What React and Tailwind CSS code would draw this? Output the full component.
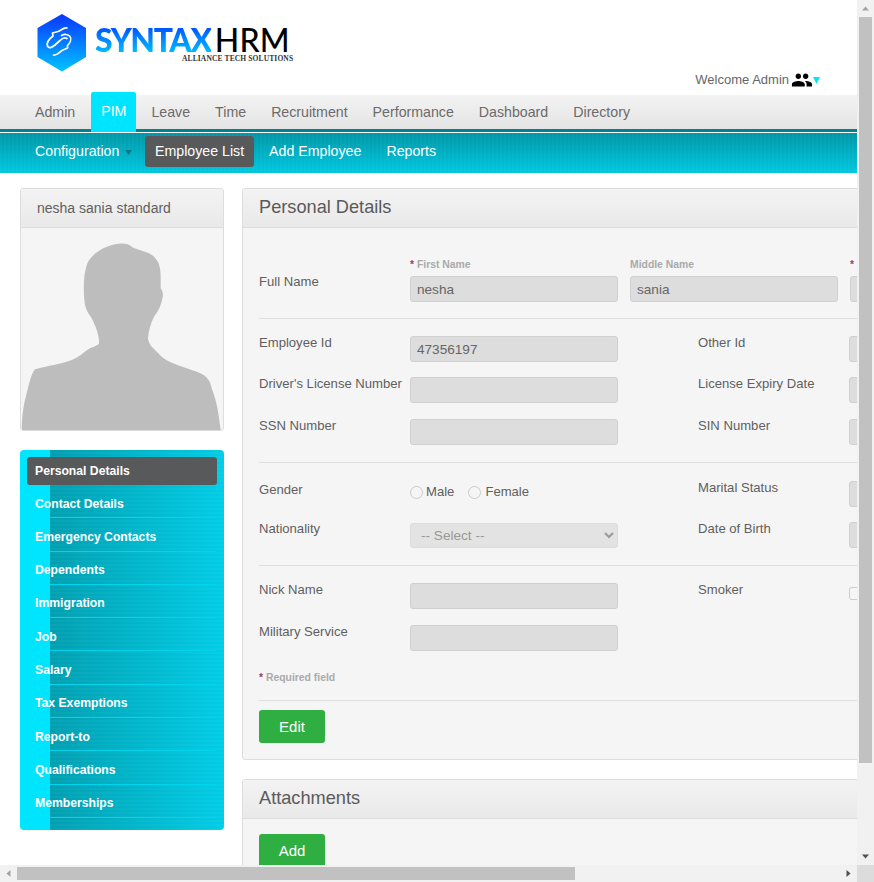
import React from 'react';
import { MdPeople } from 'react-icons/md';

const mainNav = ['Admin', 'PIM', 'Leave', 'Time', 'Recruitment', 'Performance', 'Dashboard', 'Directory'];

const sideNav = [
    'Contact Details',
    'Emergency Contacts',
    'Dependents',
    'Immigration',
    'Job',
    'Salary',
    'Tax Exemptions',
    'Report-to',
    'Qualifications',
    'Memberships',
];

const Logo = () => (
    <div className="flex items-start">
        <svg width="50" height="58" viewBox="0 0 50 58" className="shrink-0">
            <defs>
                <linearGradient id="hex" x1="0" y1="0" x2="0" y2="1">
                    <stop offset="0" stopColor="#0a35ff" />
                    <stop offset="1" stopColor="#00c4ff" />
                </linearGradient>
            </defs>
            <polygon points="25,0 49,14 49,43 25,57.5 0.5,43 0.5,14" fill="url(#hex)" />
            <path
                d="M30 14 C26 13.500 24 16.500 21 17.500 L15.500 19 L16 22 C12 25 9.500 29 10.500 32 C12 35 15 33.500 18 31 L23 26.500 C25 24.500 28 23 30 24.500 M24.500 21.500 C27 20 31 20 33 22.500 C35 25 33 29 30.500 31.500 L30.500 34 L25 36.500 C22 38.500 20 41.500 16.500 41"
                fill="none"
                stroke="#ffffff"
                strokeWidth="1.700"
                strokeLinecap="round"
                strokeLinejoin="round"
            />
        </svg>
        <div className="ml-[8px] mt-[10px] w-[200px]">
            <div className="flex items-baseline font-['Lato',sans-serif] text-[32px] leading-[32px]">
                <span className="bg-gradient-to-b from-[#1038ff] to-[#00c8ff] bg-clip-text font-black tracking-[-1.400px] text-transparent">SYNTAX</span>
                <span className="ml-[4px] font-medium tracking-[0.2px] text-black">HRM</span>
            </div>
            <div className="-mt-[1px] pl-[87px] font-['Liberation_Serif',serif] text-[7.500px] leading-[8px] font-bold tracking-[0.13px] whitespace-nowrap text-[#333333]">ALLIANCE TECH SOLUTIONS</div>
        </div>
    </div>
);

const Input = ({ value = '', className = '' }) => (
    <input
        readOnly
        value={value}
        className={`block h-[26px] rounded-[3px] border border-[#d0d0d0] bg-[#dddddd] px-[6px] text-[13.600px] text-[#666666] outline-none ${className}`}
    />
);

const NameField = ({ label, required, value }) => (
    <div className="mr-[12px] w-[208px] shrink-0">
        <div className="mb-[6px] h-[12px] pt-[1px] text-[10.400px] leading-[12px] font-bold text-[#aaaaaa]">
            {required && <span className="text-[#a04050]">* </span>}
            {label}
        </div>
        <Input value={value} className="w-[208px]" />
    </div>
);

const Row = ({ label, children, rightLabel, right, className = '', labelClass = 'pt-[1px]' }) => (
    <div className={`grid grid-cols-[151px_288px_151px_208px] ${className}`}>
        <div className={`h-[12px] leading-[12px] ${labelClass}`}>{label}</div>
        <div className="w-[208px]">{children}</div>
        {rightLabel && <div className="h-[12px] pt-[1px] leading-[12px]">{rightLabel}</div>}
        {right}
    </div>
);

const Divider = ({ className = '' }) => <div className={`h-px w-full bg-[#dedede] ${className}`} />;

const PanelHeader = ({ title }) => (
    <div className="flex h-[39px] items-center border-b border-[#dddddd] bg-gradient-to-b from-[#f3f3f3] to-[#e9e9e9] pl-[16px] text-[18.200px] text-[#5a5a5a]">
        {title}
    </div>
);

const GreenButton = ({ children }) => (
    <button className="block h-[33px] w-[66px] rounded-[3px] bg-[#2fae42] pt-[1px] text-[15px] text-white">{children}</button>
);

const ScrollArrow = ({ points, fill }) => (
    <svg width="17" height="17" viewBox="0 0 17 17" className="shrink-0">
        <polygon points={points} fill={fill} />
    </svg>
);

const App = () => {
    return (
        <div className="flex h-[882px] w-[874px] flex-col overflow-hidden bg-white font-['Liberation_Sans',Arial,sans-serif]">
            <div className="flex h-[865px] w-[874px]">
                <div className="h-[865px] w-[857px] overflow-hidden">
                    <div className="w-[1400px]">
                        <div className="w-[857px]">
                            <div className="flex h-[95px] justify-between pl-[37px]">
                                <div className="pt-[14px]">
                                    <Logo />
                                </div>
                                <div className="mr-[37px] mb-[4px] flex items-center self-end text-[13px] text-[#666666]">
                                    Welcome Admin
                                    <MdPeople className="ml-[2px] text-[22px] text-black" />
                                    <svg width="7" height="7" viewBox="0 0 7 7" className="mt-[1px]">
                                        <polygon points="0,0 7,0 3.500,7" fill="#00e5ff" />
                                    </svg>
                                </div>
                            </div>

                            <div className="flex h-[37px] gap-[5px] border-b-[3px] border-[#00838f] bg-gradient-to-b from-[#f3f3f3] to-[#e4e4e4] pl-[25px]">
                                {mainNav.map((item) => (
                                    <div
                                        key={item}
                                        className={
                                            item === 'PIM'
                                                ? 'z-10 -mt-[3px] ml-[1px] flex h-[40px] items-center rounded-t-[2px] bg-[#00e5ff] px-[10px] text-[14.200px] text-white'
                                                : 'flex h-[34px] items-center px-[10px] pt-[1px] text-[14.200px] text-[#6b6b6b]'
                                        }
                                    >
                                        {item}
                                    </div>
                                ))}
                            </div>
                            <div className="h-px bg-white" />
                            <div className="flex h-[40px] items-start gap-[5px] bg-[repeating-linear-gradient(90deg,rgba(255,255,255,0.025)_0_2px,transparent_2px_4px),linear-gradient(#0097a7,#00c8e0)] pt-[3px] pl-[25px] text-[14.200px] text-white">
                                <div className="flex h-[31px] w-[115px] items-center pl-[10px]">
                                    Configuration
                                    <svg width="7" height="5" viewBox="0 0 7 5" className="mt-[2px] ml-[6px]">
                                        <polygon points="0,0 7,0 3.500,5" fill="#00788a" />
                                    </svg>
                                </div>
                                <div className="flex h-[31px] items-center rounded-[3px] bg-[#58595b] px-[10px]">Employee List</div>
                                <div className="flex h-[31px] items-center px-[10px]">Add Employee</div>
                                <div className="flex h-[31px] items-center px-[10px]">Reports</div>
                            </div>
                        </div>

                        <div className="flex gap-[18px] pt-[15px] pl-[20px]">
                            <div className="w-[204px] shrink-0">
                                <div className="overflow-hidden rounded-[3px] border border-[#dddddd]">
                                    <div className="flex h-[39px] items-center border-b border-[#dddddd] bg-gradient-to-b from-[#f3f3f3] to-[#e9e9e9] pl-[16px] text-[14px] text-[#5f5f5f]">
                                        nesha sania standard
                                    </div>
                                    <div className="bg-[#f5f5f5]">
                                        <svg viewBox="63 144 606 606" className="block h-[202px] w-[202px]">
                                            <path
                                                fill="#bdbdbd"
                                                d="M65 750 C66 700 72 670 80 640 C88 610 94 580 105 568 C130 560 165 555 200 545 C240 535 250 515 270 505 C285 498 297 495 297 488 C298 470 290 445 280 425 C272 405 255 395 253 360 C250 320 250 285 262 250 C275 222 310 200 345 193 C365 189 385 190 395 200 C410 210 440 212 460 228 C478 245 482 265 482 290 L482 325 C488 333 490 342 488 352 C484 375 475 395 462 410 C452 430 445 455 444 475 C446 495 460 505 475 520 C495 545 530 555 590 575 C615 585 630 595 635 625 C645 650 652 680 655 700 L662 750 Z"
                                            />
                                        </svg>
                                    </div>
                                </div>

                                <div className="mt-[19px] h-[380px] overflow-hidden rounded-[4px] bg-[linear-gradient(90deg,#00e5ff_0_30px,transparent_30px),repeating-linear-gradient(0deg,rgba(255,255,255,0.03)_0_2px,transparent_2px_4px),linear-gradient(90deg,#0097a7,#00cde6)] pt-[7px] text-[12.200px] font-bold text-white">
                                    <div className="ml-[7px] flex h-[28px] w-[190px] items-center rounded-[3px] bg-[#58595b] pl-[8px]">Personal Details</div>
                                    {sideNav.map((item) => (
                                        <div key={item} className="mr-[8px] ml-[30px] flex h-[33.300px] items-center border-b border-[#00d5ee] pt-[5px] whitespace-nowrap">
                                            <span className="-ml-[15px]">{item}</span>
                                        </div>
                                    ))}
                                </div>
                            </div>

                            <div className="w-[1100px] shrink-0">
                                <div className="overflow-hidden rounded-[3px] border border-[#dddddd] bg-[#f5f5f5] text-[13.100px] text-[#5f5f5f]">
                                    <PanelHeader title="Personal Details" />
                                    <div className="px-[16px] pb-[16px]">
                                        <div className="flex pt-[30px]">
                                            <div className="w-[151px] shrink-0 pt-[16px] leading-[16px]">Full Name</div>
                                            <NameField required label="First Name" value="nesha" />
                                            <NameField label="Middle Name" value="sania" />
                                            <NameField required label="Last Name" value="standard" />
                                        </div>
                                        <Divider className="mt-[16px]" />

                                        <Row className="mt-[17px]" label="Employee Id" rightLabel="Other Id" right={<Input className="w-[208px]" />}>
                                            <Input value="47356197" className="w-[208px]" />
                                        </Row>
                                        <Row className="mt-[15px]" label="Driver's License Number" rightLabel="License Expiry Date" right={<Input className="w-[208px]" />}>
                                            <Input className="w-[208px]" />
                                        </Row>
                                        <Row className="mt-[16px]" label="SSN Number" rightLabel="SIN Number" right={<Input className="w-[208px]" />}>
                                            <Input className="w-[208px]" />
                                        </Row>
                                        <Divider className="mt-[17px]" />

                                        <Row className="mt-[18px]" label="Gender" labelClass="pt-[3px]" rightLabel="Marital Status" right={<Input className="w-[208px]" />}>
                                            <div className="flex h-[22px] items-center leading-[16px]">
                                                <input type="radio" disabled className="m-0 size-[13px]" />
                                                <span className="ml-[3px]">Male</span>
                                                <input type="radio" disabled className="m-0 ml-[14px] size-[13px]" />
                                                <span className="ml-[4px]">Female</span>
                                            </div>
                                        </Row>
                                        <Row className="mt-[15px]" label="Nationality" rightLabel="Date of Birth" right={<Input className="w-[208px]" />}>
                                            <select disabled className="mt-[1px] block h-[25px] w-[208px] rounded-[3px] border border-[#dcdcdc] bg-[#e3e3e3] pl-[6px] text-[13.600px] text-[#999999]">
                                                <option>-- Select --</option>
                                            </select>
                                        </Row>
                                        <Divider className="mt-[17px]" />

                                        <Row className="mt-[17px]" label="Nick Name" rightLabel="Smoker" right={<div className="pt-[3px]"><input type="checkbox" disabled className="m-0 size-[13px]" /></div>}>
                                            <Input className="w-[208px]" />
                                        </Row>
                                        <Row className="mt-[16px]" label="Military Service">
                                            <Input className="w-[208px]" />
                                        </Row>

                                        <div className="mt-[21px] h-[12px] text-[10.400px] leading-[12px] font-bold text-[#aaaaaa]">
                                            <span className="text-[#a04050]">* </span>Required field
                                        </div>
                                        <Divider className="mt-[16px]" />
                                        <div className="mt-[9px]">
                                            <GreenButton>Edit</GreenButton>
                                        </div>
                                    </div>
                                </div>

                                <div className="mt-[19px] overflow-hidden rounded-[3px] border border-[#dddddd] bg-[#f5f5f5]">
                                    <PanelHeader title="Attachments" />
                                    <div className="px-[16px] pt-[15px] pb-[17px]">
                                        <GreenButton>Add</GreenButton>
                                    </div>
                                </div>
                            </div>
                        </div>
                    </div>
                </div>

                <div className="flex h-[865px] w-[17px] flex-col bg-[#f1f1f1]">
                    <ScrollArrow points="5,10.500 12,10.500 8.500,6.500" fill="#a3a3a3" />
                    <div className="mx-[2px] h-[746px] bg-[#c1c1c1]" />
                    <div className="grow" />
                    <ScrollArrow points="5,6.500 12,6.500 8.500,10.500" fill="#505050" />
                </div>
            </div>

            <div className="flex h-[17px] w-[874px] bg-[#f1f1f1]">
                <ScrollArrow points="10.500,5 10.500,12 6.500,8.500" fill="#a3a3a3" />
                <div className="my-[2px] w-[558px] bg-[#c1c1c1]" />
                <div className="grow" />
                <ScrollArrow points="6.500,5 6.500,12 10.500,8.500" fill="#505050" />
                <div className="h-[17px] w-[17px] bg-[#dcdcdc]" />
            </div>
        </div>
    );
};

export default App;
